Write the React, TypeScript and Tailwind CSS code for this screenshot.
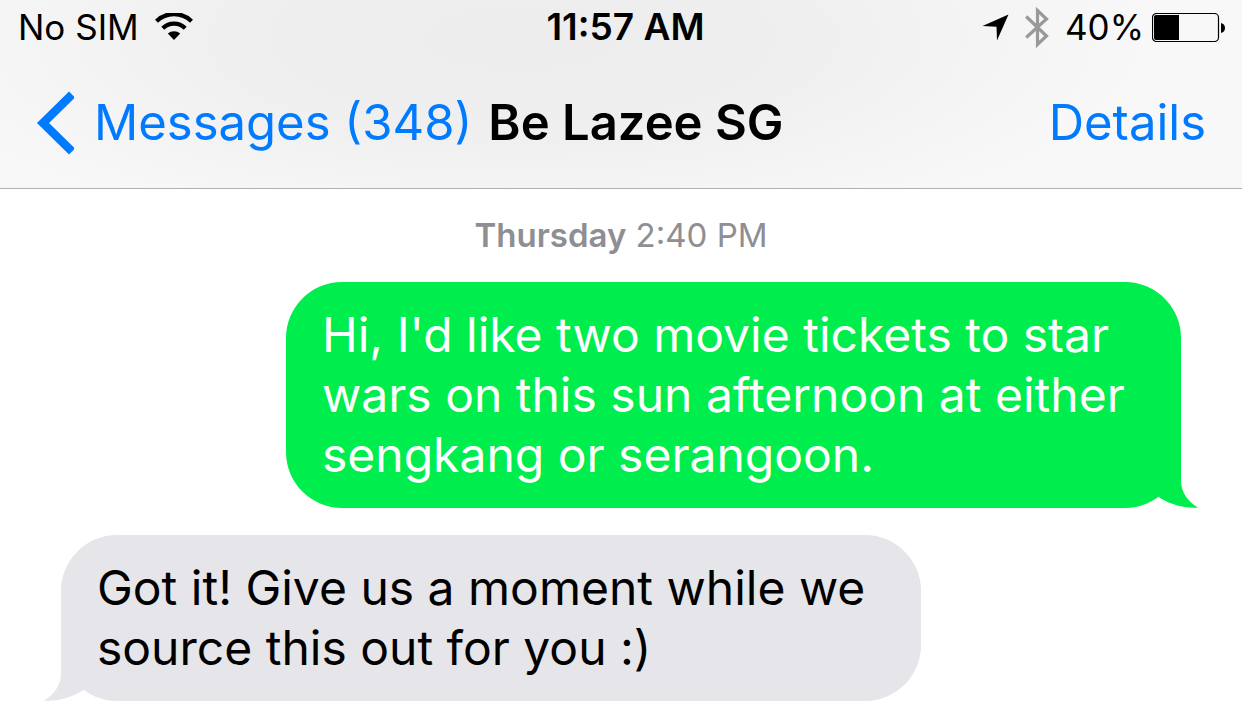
import type { ReactNode } from "react";

function WifiIcon() {
  return (
    <svg className="h-7 w-[38px]" viewBox="0 0 38 28" fill="none" aria-hidden="true">
      <path d="M1.500 8.200A25 25 0 0 1 36.500 8.200" stroke="#000" strokeWidth="4.200" />
      <path d="M7.800 15.200A16 16 0 0 1 30.200 15.200" stroke="#000" strokeWidth="4.200" />
      <path d="M19 27L12.800 20.600A9.500 9.500 0 0 1 25.200 20.600Z" fill="#000" />
    </svg>
  );
}

function LocationIcon() {
  return (
    <svg className="h-[27px] w-[27px]" viewBox="0 0 27 27" aria-hidden="true">
      <path d="M26.500 0.500L15 26.500L14.500 12.700L0.500 12Z" fill="#000" />
    </svg>
  );
}

function BluetoothIcon() {
  return (
    <svg className="h-[41px] w-6" viewBox="0 0 24 41" fill="none" aria-hidden="true">
      <path d="M1.200 9.500L21.500 29L12.500 37.500V3.500L21.500 12L1.200 30.500" stroke="#999" strokeWidth="3.200" />
    </svg>
  );
}

function BatteryIcon() {
  return (
    <svg className="h-[29px] w-[73px]" viewBox="0 0 73 29" fill="none" aria-hidden="true">
      <rect x="0.500" y="0.500" width="66" height="28" rx="4" stroke="#000" strokeWidth="1.200" />
      <path d="M4 2H27V27H4Q2 27 2 25V4Q2 2 4 2Z" fill="#000" />
      <path d="M69 10Q73 11 73 15Q73 19 69 20Z" fill="#000" />
    </svg>
  );
}

function BackIcon() {
  return (
    <svg className="h-16 w-[38px] shrink-0" viewBox="0 0 38 64" fill="none" aria-hidden="true">
      <path d="M36 3.500L7 32L36 60.500" stroke="#007aff" strokeWidth="8.500" />
    </svg>
  );
}

function Tail({ className }: { className: string }) {
  return (
    <svg className={className} viewBox="0 0 73 67" aria-hidden="true">
      <path
        d="M56 0V40C56 51 63 61 73 66.500C60 67.500 47 64 35 57L20 40V0Z"
        fill="currentColor"
      />
    </svg>
  );
}

function Bubble({ sent = false, children }: { sent?: boolean; children: ReactNode }) {
  return (
    <li
      className={
        sent
          ? "relative mr-[61px] w-[895px] max-w-[80%] self-end rounded-[56px] bg-[#00ee4d] px-9 pt-[23px] pb-[23px] text-white"
          : "relative ml-[61px] w-[860px] max-w-[80%] self-start rounded-[56px] bg-[#e5e5ea] px-9 pt-[23px] pb-[23px] text-black"
      }
    >
      <Tail
        className={
          sent
            ? "absolute right-[-17px] bottom-0 h-[67px] w-[73px] text-[#00ee4d]"
            : "absolute bottom-0 left-[-17px] h-[67px] w-[73px] -scale-x-100 text-[#e5e5ea]"
        }
      />
      <p className="relative text-[48px] leading-[60px]">{children}</p>
    </li>
  );
}

export default function App() {
  return (
    <div className="min-h-screen bg-white font-['Inter',sans-serif] text-black">
      <header className="border-b border-[#b2b2b2] bg-[#f8f8f8] bg-[radial-gradient(ellipse_50%_110%_at_42%_20%,#ededee_0%,#efeff0_45%,#f8f8f8_100%)]">
        <div className="grid h-[54px] grid-cols-[1fr_auto_1fr] items-center pr-[17px] pl-[18px] text-[35px] leading-[54px]">
          <div className="flex items-center gap-4">
            <span>No SIM</span>
            <WifiIcon />
          </div>
          <time className="pl-2 text-[37px] font-semibold">11:57 AM</time>
          <div className="flex items-center justify-end">
            <LocationIcon />
            <span className="ml-4">
              <BluetoothIcon />
            </span>
            <span className="ml-4">40%</span>
            <span className="ml-2">
              <BatteryIcon />
            </span>
          </div>
        </div>
        <nav className="flex h-[134px] items-center px-9 pt-1 text-[49px] leading-[60px] whitespace-nowrap">
          <button type="button" className="flex items-center gap-5 text-[#007aff]">
            <BackIcon />
            <span>Messages (348)</span>
          </button>
          <h1 className="ml-4 font-semibold">Be Lazee SG</h1>
          <button type="button" className="ml-auto text-[#007aff]">
            Details
          </button>
        </nav>
      </header>
      <main className="pb-5">
        <p className="pt-[26px] text-center text-[33px] leading-10 text-[#8e8e93]">
          <span className="font-semibold">Thursday</span> 2:40 PM
        </p>
        <ul className="mt-[27px] flex flex-col gap-[27px]">
          <Bubble sent>
            Hi, I'd like two movie tickets to star wars on this sun afternoon at either sengkang or
            serangoon.
          </Bubble>
          <Bubble>Got it! Give us a moment while we source this out for you :)</Bubble>
        </ul>
      </main>
    </div>
  );
}
